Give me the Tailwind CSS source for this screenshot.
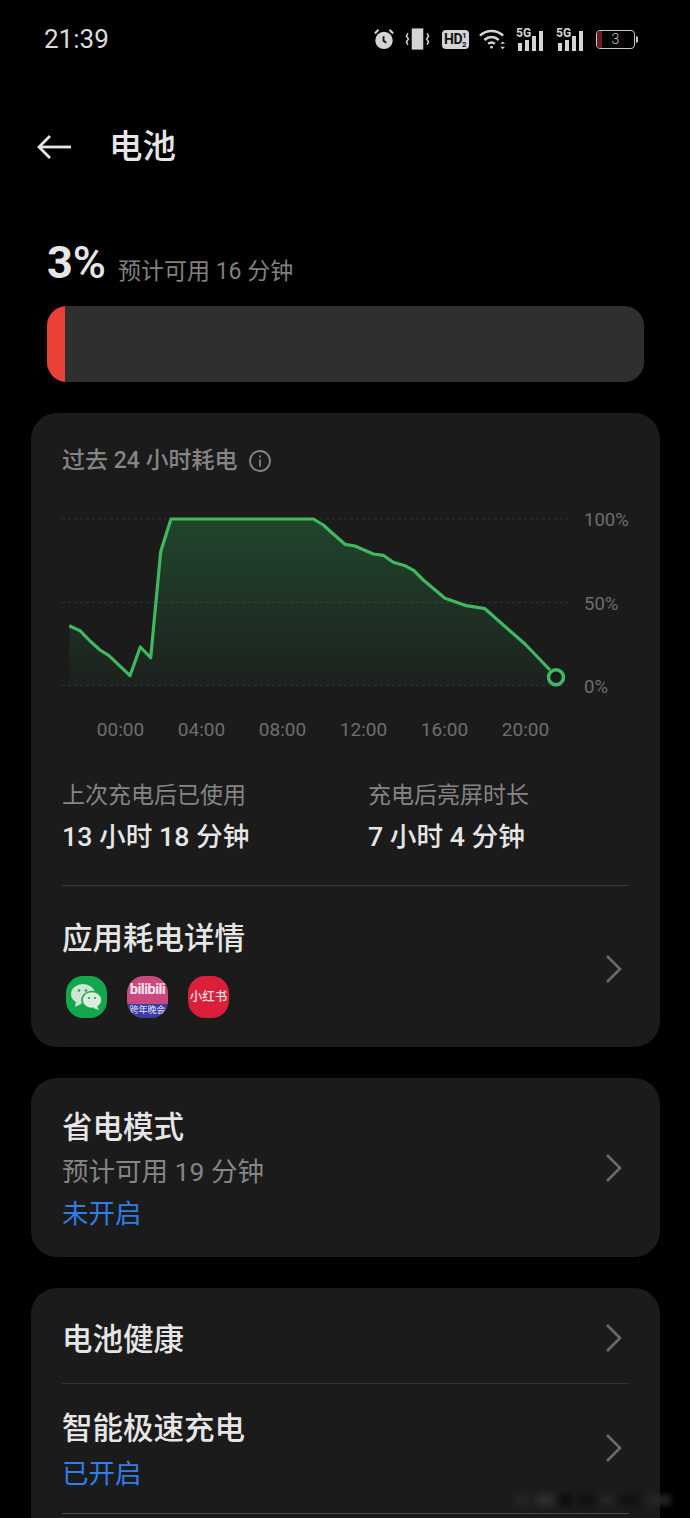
<!doctype html>
<html lang="zh-CN">
<head>
    <meta charset="utf-8">
    <meta name="viewport" content="width=device-width, initial-scale=1.0">
    <title>电池</title>
    <script src="https://cdn.jsdelivr.net/npm/@tailwindcss/browser@4"></script>
</head>
<body class="bg-black text-[#e6e6e6] [font-family:Roboto,'Noto_Sans_CJK_SC',sans-serif]">
<div class="relative w-[690px] h-[1518px] overflow-hidden">

    <!-- status bar -->
    <div class="h-[78px] pl-[44px] pr-[52px] flex items-center justify-between">
        <span class="text-[26px] text-[#dcdcdc]">21:39</span>
        <div class="flex items-center gap-[10px] text-[#d4d4d4]">
            <svg width="22" height="24" viewBox="0 0 24 24"><circle cx="12" cy="13.500" r="9.500" fill="currentColor"/><path d="M2 6l4-4M22 6l-4-4" stroke="currentColor" stroke-width="2.200"/><path d="M11.500 9v5l3 2" stroke="#111" stroke-width="2" fill="none"/></svg>
            <svg class="mr-[2px]" width="25" height="24" viewBox="0 0 26 24"><rect x="7" y="1" width="12" height="22" fill="currentColor"/><path d="M3 6l-1.500 3 2 3-2 3 1.500 3M23 6l1.500 3-2 3 2 3-1.500 3" stroke="currentColor" stroke-width="1.600" fill="none"/></svg>
            <div class="w-[27px] h-[19px] rounded-[4px] bg-[#d4d4d4] text-[#111] text-[14px] leading-[19px] font-bold pl-[2px] tracking-[-0.5px] flex">HD<span class="text-[8px] leading-[9px] pt-[1px]">1<br>2</span></div>
            <svg width="27" height="24" viewBox="0 0 28 24" fill="none" stroke="currentColor" stroke-width="2.600"><path d="M1 8.500C8 2 18 2 25 8.500"/><path d="M5.500 13c4.500-4 10.500-4 15 0"/><path d="M9.500 17c2.500-2 4.500-2 7 0"/><circle cx="13" cy="20.500" r="1.400" fill="currentColor" stroke="none"/><path d="M22 17l2.500-2.500 2.500 2.500zM22 20l2.500 2.500 2.500-2.500z" fill="currentColor" stroke="none"/></svg>
            <div class="relative w-[30px] h-[24px]">
                <span class="absolute left-0 top-[-3px] text-[12px] font-bold">5G</span>
                <div class="absolute inset-0 flex items-end gap-[3px] pl-[2px]"><i class="block w-[4px] h-[8px] bg-[#d4d4d4]"></i><i class="block w-[4px] h-[11px] bg-[#d4d4d4]"></i><i class="block w-[4px] h-[15px] bg-[#d4d4d4]"></i><i class="block w-[4px] h-[20px] bg-[#d4d4d4]"></i></div>
            </div>
            <div class="relative w-[30px] h-[24px]">
                <span class="absolute left-0 top-[-3px] text-[12px] font-bold">5G</span>
                <div class="absolute inset-0 flex items-end gap-[3px] pl-[2px]"><i class="block w-[4px] h-[8px] bg-[#d4d4d4]"></i><i class="block w-[4px] h-[11px] bg-[#d4d4d4]"></i><i class="block w-[4px] h-[15px] bg-[#d4d4d4]"></i><i class="block w-[4px] h-[20px] bg-[#d4d4d4]"></i></div>
            </div>
            <div class="flex items-center gap-[1px]">
                <div class="relative w-[39px] h-[19px] rounded-[4px] border border-[#c8c8c8] overflow-hidden text-center text-[14px] leading-[17px] font-light">
                    <div class="absolute left-0 top-0 bottom-0 w-[5px] bg-[#6a1c1f]"></div>3
                </div>
                <div class="w-[2px] h-[7px] bg-[#c8c8c8] rounded-r-sm"></div>
            </div>
        </div>
    </div>

    <!-- header -->
    <div class="mt-[36px] h-[66px] pl-[37px] flex items-center">
        <svg width="34" height="26" viewBox="0 0 34 26" fill="none" stroke="#e6e6e6" stroke-width="2.800"><path d="M34 13H2"/><path d="M13 2L2 13l11 11"/></svg>
        <h1 class="ml-[38px] text-[33.500px] leading-[44px] font-medium">电池</h1>
    </div>

    <!-- level -->
    <div class="mt-[54px] h-[72px] pt-[1px] pl-[47px] flex items-start">
        <span class="text-[45px] leading-[56px] font-bold">3<span class="font-medium text-[45px]">%</span></span>
        <span class="ml-[12px] mt-[21px] text-[23px] leading-[32px] text-[#808080]">预计可用 16 分钟</span>
    </div>
    <div class="ml-[47px] w-[597px] h-[76px] rounded-[20px] bg-[#2f2f2f] overflow-hidden">
        <div class="w-[18px] h-full bg-[#ea4038]"></div>
    </div>

    <!-- usage card -->
    <div class="mt-[31px] ml-[31px] w-[629px] h-[634px] rounded-[26px] bg-[#1b1b1b] px-[31px] pt-[32px]">
        <div class="flex items-center h-[32px] text-[23px] font-medium text-[#858585]">
            <span>过去 24 小时耗电</span>
            <svg class="ml-[10px]" width="24" height="24" viewBox="0 0 24 24" fill="none" stroke="#858585" stroke-width="1.800"><circle cx="12" cy="12" r="10"/><path d="M12 10.500v7M12 6.500v2"/></svg>
        </div>

        <svg class="mt-[23px] block" width="568" height="245" viewBox="62 500 568 245">
            <defs>
                <linearGradient id="area" x1="0" y1="0" x2="0" y2="1">
                    <stop offset="0" stop-color="#2f9d50" stop-opacity="0.32"/>
                    <stop offset="1" stop-color="#2f9d50" stop-opacity="0.05"/>
                </linearGradient>
            </defs>
            <path d="M62 519H568M62 602.500H568M62 685.500H568" stroke="#323232" stroke-width="1" stroke-dasharray="3 3"/>
            <path fill="url(#area)" d="M69.300 625.700L80 630.700 90 641 100 650 109 655.700 130 675.700 140.300 647 150.700 657.700 160.700 551.700 171 519H313.300L323.300 525 333.300 534 345 544.300 355 546 373.300 554 383.300 555.300 393.300 562.300 405 565.700 414 570.700 423.300 580 445 598.300 465 605.300 485 608.700 503.300 625 525 644 550 670 556 685.500H69.300Z"/>
            <path fill="none" stroke="#3fb860" stroke-width="3.200" stroke-linejoin="round" d="M69.300 625.700L80 630.700 90 641 100 650 109 655.700 130 675.700 140.300 647 150.700 657.700 160.700 551.700 171 519H313.300L323.300 525 333.300 534 345 544.300 355 546 373.300 554 383.300 555.300 393.300 562.300 405 565.700 414 570.700 423.300 580 445 598.300 465 605.300 485 608.700 503.300 625 525 644 550 670"/>
            <circle cx="556" cy="677.300" r="7.500" fill="#1b1b1b" stroke="#3fb860" stroke-width="3.500"/>
            <g fill="#6e6e6e" font-size="18.500">
                <text x="584" y="526">100%</text>
                <text x="584" y="609.500">50%</text>
                <text x="584" y="692.500">0%</text>
            </g>
            <g fill="#6e6e6e" font-size="19" text-anchor="middle">
                <text x="120.500" y="736">00:00</text>
                <text x="201.500" y="736">04:00</text>
                <text x="282.500" y="736">08:00</text>
                <text x="363.500" y="736">12:00</text>
                <text x="444.500" y="736">16:00</text>
                <text x="525.500" y="736">20:00</text>
            </g>
        </svg>

        <div class="mt-[34px] pt-[1px] flex h-[107px] border-b border-[#3c3c3c]">
            <div class="w-[306px]">
                <p class="text-[23px] leading-[32px] text-[#858585]">上次充电后已使用</p>
                <p class="mt-[7px] text-[26.700px] leading-[36px] font-medium">13 小时 18 分钟</p>
            </div>
            <div>
                <p class="text-[23px] leading-[32px] text-[#858585]">充电后亮屏时长</p>
                <p class="mt-[7px] text-[26.700px] leading-[36px] font-medium">7 小时 4 分钟</p>
            </div>
        </div>

        <div class="relative pt-[32px]">
            <p class="text-[30.500px] leading-[42px] font-medium">应用耗电详情</p>
            <div class="mt-[16px] flex gap-[20px] pl-[4px]">
                <div class="w-[41px] h-[42px] rounded-[17px] bg-[#12a74a] flex items-center justify-center">
                    <svg width="34" height="30" viewBox="0 0 34 30"><ellipse cx="13" cy="12" rx="12" ry="10" fill="#cfe6d4"/><path d="M6 19l-1 6 6-3z" fill="#cfe6d4"/><ellipse cx="22" cy="18" rx="10" ry="8.500" fill="#dcecdf" stroke="#12a74a" stroke-width="1.500"/><path d="M27 24l2 4-6-2z" fill="#dcecdf"/><circle cx="9" cy="8.500" r="1.300" fill="#12a74a"/><circle cx="16" cy="8.500" r="1.300" fill="#12a74a"/><circle cx="19" cy="16" r="1.100" fill="#12a74a"/><circle cx="25" cy="16" r="1.100" fill="#12a74a"/></svg>
                </div>
                <div class="w-[41px] h-[42px] rounded-[17px] overflow-hidden bg-[#c9487e] flex flex-col">
                    <span class="h-[28px] text-center text-[#fbe3ec] text-[14.500px] leading-[28px] font-bold tracking-[-0.5px] whitespace-nowrap">bilibili</span>
                    <span class="flex-1 bg-[#3a3aa8] text-center text-[#e8e8f5] text-[9px] leading-[13px] whitespace-nowrap">跨年晚会</span>
                </div>
                <div class="w-[41px] h-[42px] rounded-[17px] bg-[#db1f3a] flex items-center justify-center text-[#f6e0e0] text-[12.500px] font-medium whitespace-nowrap">小红书</div>
            </div>
            <svg class="absolute right-[7px] top-[68px]" width="18" height="30" viewBox="0 0 18 30" fill="none" stroke="#6b6b6b" stroke-width="2.600"><path d="M3 2l13 13L3 28"/></svg>
        </div>
    </div>

    <!-- power saving card -->
    <div class="relative mt-[31px] ml-[31px] w-[629px] h-[179px] rounded-[26px] bg-[#1b1b1b] px-[31px] pt-[29px]">
        <p class="text-[30.500px] leading-[42px] font-medium">省电模式</p>
        <p class="mt-[2px] text-[26.500px] leading-[42px] text-[#858585]">预计可用 19 分钟</p>
        <p class="text-[26.500px] leading-[42px] text-[#2f7fe6]">未开启</p>
        <svg class="absolute right-[38px] top-[75px]" width="18" height="30" viewBox="0 0 18 30" fill="none" stroke="#6b6b6b" stroke-width="2.600"><path d="M3 2l13 13L3 28"/></svg>
    </div>

    <!-- battery health card -->
    <div class="mt-[31px] ml-[31px] w-[629px] h-[300px] rounded-[26px] bg-[#1b1b1b] px-[31px]">
        <div class="relative h-[96px] pt-[31px] border-b border-[#333333]">
            <p class="text-[30.500px] leading-[42px] font-medium">电池健康</p>
            <svg class="absolute right-[7px] top-[35px]" width="18" height="30" viewBox="0 0 18 30" fill="none" stroke="#6b6b6b" stroke-width="2.600"><path d="M3 2l13 13L3 28"/></svg>
        </div>
        <div class="relative h-[130px] pt-[24px] border-b border-[#4a4a4a]">
            <p class="text-[30.500px] leading-[42px] font-medium">智能极速充电</p>
            <p class="mt-[3px] text-[26.500px] leading-[42px] text-[#2f7fe6]">已开启</p>
            <svg class="absolute right-[7px] top-[49px]" width="18" height="30" viewBox="0 0 18 30" fill="none" stroke="#6b6b6b" stroke-width="2.600"><path d="M3 2l13 13L3 28"/></svg>
        </div>
    </div>

    <!-- blurred watermark -->
    <div class="absolute left-[515px] top-[1488px] w-[175px] h-[24px] flex items-center gap-[7px] blur-[3px]">
        <i class="block w-[14px] h-[10px] bg-[#262626]"></i>
        <i class="block w-[18px] h-[12px] bg-[#2e2e2e]"></i>
        <i class="block w-[10px] h-[12px] bg-[#0c0c0c]"></i>
        <i class="block w-[16px] h-[10px] bg-[#101010]"></i>
        <i class="block w-[12px] h-[8px] bg-[#2a2a2a]"></i>
        <i class="block w-[20px] h-[10px] bg-[#111111]"></i>
        <i class="block w-[24px] h-[10px] bg-[#262626]"></i>
    </div>
</div>
</body>
</html>
